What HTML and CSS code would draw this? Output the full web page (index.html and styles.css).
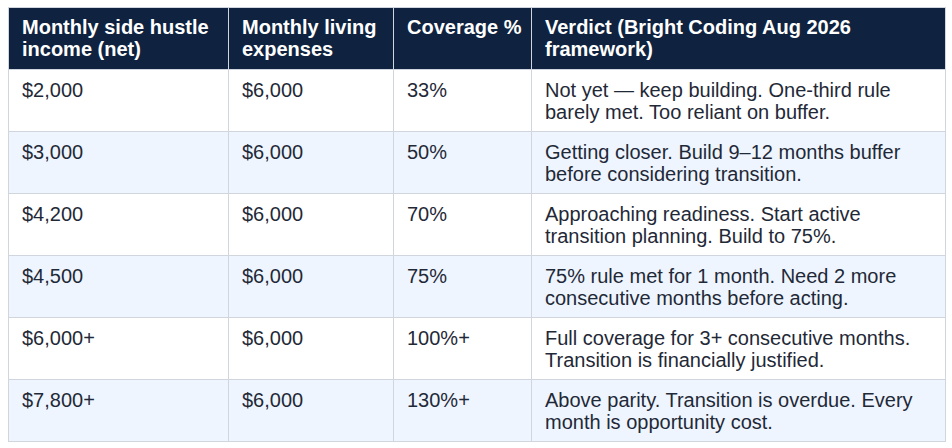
FILE: index.html
```html
<!DOCTYPE html>
<html>
<head>
<meta charset="utf-8">
<link rel="stylesheet" href="styles.css">
</head>
<body>
<table class="grid">
  <colgroup>
    <col class="c1"><col class="c2"><col class="c3"><col class="c4">
  </colgroup>
  <thead>
    <tr>
      <th>Monthly side hustle income (net)</th>
      <th>Monthly living expenses</th>
      <th>Coverage %</th>
      <th>Verdict (Bright Coding Aug 2026 framework)</th>
    </tr>
  </thead>
  <tbody>
    <tr><td>$2,000</td><td>$6,000</td><td>33%</td><td>Not yet — keep building. One-third rule barely met. Too reliant on buffer.</td></tr>
    <tr><td>$3,000</td><td>$6,000</td><td>50%</td><td>Getting closer. Build 9–12 months buffer before considering transition.</td></tr>
    <tr><td>$4,200</td><td>$6,000</td><td>70%</td><td>Approaching readiness. Start active transition planning. Build to 75%.</td></tr>
    <tr><td>$4,500</td><td>$6,000</td><td>75%</td><td>75% rule met for 1 month. Need 2 more consecutive months before acting.</td></tr>
    <tr><td>$6,000+</td><td>$6,000</td><td>100%+</td><td>Full coverage for 3+ consecutive months. Transition is financially justified.</td></tr>
    <tr><td>$7,800+</td><td>$6,000</td><td>130%+</td><td>Above parity. Transition is overdue. Every month is opportunity cost.</td></tr>
  </tbody>
</table>
</body>
</html>
```
FILE: styles.css
```css
html, body {
  margin: 0;
  padding: 0;
  background: #ffffff;
}
body {
  padding: 7px 8px;
  font-family: "Liberation Sans", Arial, sans-serif;
}
.grid {
  border-collapse: collapse;
  table-layout: fixed;
  width: 937px;
  font-size: 20px;
  line-height: 22px;
  color: #1f2937;
}
.c1 { width: 220px; }
.c2 { width: 165px; }
.c3 { width: 138px; }
.c4 { width: 414px; }
.grid th, .grid td {
  border: 1px solid #d1d5de;
  padding: 9px 6px 8px 13px;
  text-align: left;
  vertical-align: top;
}
.grid th {
  padding-top: 8px;
  padding-bottom: 9px;
  background: #0f2340;
  color: #ffffff;
  font-weight: bold;
}
.grid tbody tr:nth-child(even) td {
  background: #eef5ff;
}
```
